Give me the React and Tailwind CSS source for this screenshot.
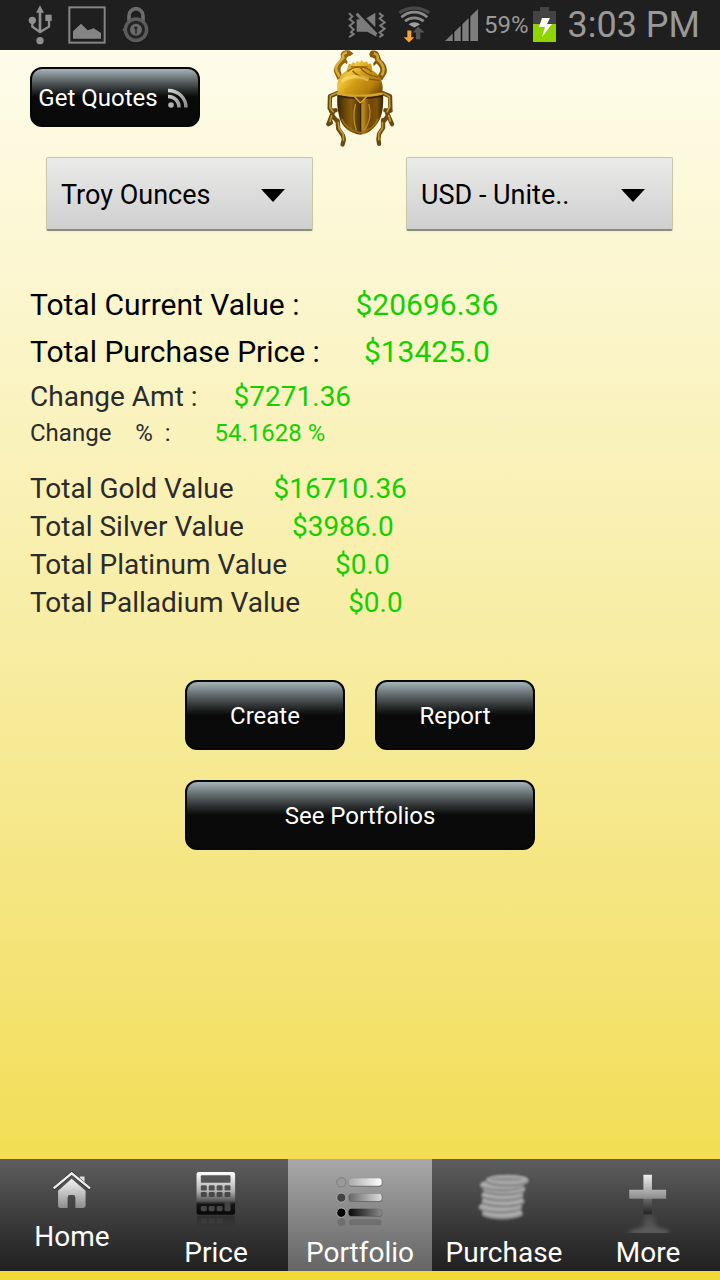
import React from "react";

function UsbIcon() {
  return (
    <svg viewBox="84 15 72 120" className="h-10 w-6" fill="#8f8f8f" aria-hidden="true">
      <path d="M120 16l12 22h-8v57h-8V38h-8z" />
      <circle cx="97" cy="61" r="11" />
      <rect x="136" y="44" width="19" height="19" />
      <circle cx="120" cy="122" r="11" />
      <path d="M97 66v14l23 16 27-16V60" fill="none" stroke="#8f8f8f" strokeWidth="7" />
    </svg>
  );
}

function PictureIcon() {
  return (
    <svg viewBox="207 18 114 114" className="size-[38px]" aria-hidden="true">
      <rect x="211" y="22" width="106" height="106" fill="none" stroke="#858585" strokeWidth="6" />
      <path d="M222 116V94l24-23 20 20 18-6 22 14v17z" fill="#858585" />
    </svg>
  );
}

function LockIcon() {
  return (
    <svg viewBox="365 17 81 111" className="h-[37px] w-[27px]" aria-hidden="true">
      <path d="M386 62V46a21 21 0 0 1 42 0v16" fill="none" stroke="#6c6c6c" strokeWidth="11" />
      <circle cx="407" cy="88" r="32" fill="#242424" stroke="#5c5c5c" strokeWidth="10" />
      <path d="M366 88l6-7v14z" fill="#5c5c5c" />
      <circle cx="407" cy="88" r="18" fill="#6a6a6a" />
      <path d="M402 79h9v6l-2 2v13h-4V87l-3-2z" fill="#202020" />
    </svg>
  );
}

function VibrateMuteIcon() {
  return (
    <svg viewBox="142 33 114 80" className="h-[27px] w-[38px]" aria-hidden="true">
      <g fill="none" stroke="#7c7c7c" strokeWidth="6">
        <path d="M145 39l10 10-8 8 12 10-12 10 12 11-8 8 8 6-14 9" />
        <path d="M235 39l11 8-9 8 15 12-13 9 13 10-15 11 9 7-10 7" />
      </g>
      <path d="M168 57h12l47 46v7l-27-15h-32z" fill="#7c7c7c" />
      <path d="M197 54l27-16v43z" fill="#7c7c7c" />
      <path d="M173 37l58 60" stroke="#1f1f1f" strokeWidth="4" />
      <path d="M168 41l59 62" stroke="#7c7c7c" strokeWidth="9" />
    </svg>
  );
}

function WifiIcon() {
  return (
    <svg viewBox="294 20 99 110" className="h-[37px] w-[33px]" aria-hidden="true">
      <path d="M298 40c27-19 62-19 90 0" fill="none" stroke="#484848" strokeWidth="10" />
      <path d="M304 53c23-20 55-20 78 0" fill="none" stroke="#8a8a8a" strokeWidth="8" />
      <path d="M315 65c16-13 39-13 56 0" fill="none" stroke="#8a8a8a" strokeWidth="8" />
      <path d="M326 75c9-9 25-9 34 0l-17 9z" fill="#a0a0a0" />
      <path d="M348 119v-20h-10l16-17 20 17h-13v20z" fill="#555" />
      <path d="M322 93h12v20h9l-16 16-16-16h11z" fill="#ffa22b" />
    </svg>
  );
}

function SignalIcon() {
  return (
    <svg viewBox="0 0 33 32" className="h-8 w-[33px]" aria-hidden="true">
      <path d="M0 32L33 0v32z" fill="#7d7d7d" />
      <path d="M8.500 21v11M16.500 14v18M24.500 7v25" stroke="#111" strokeWidth="1.500" />
    </svg>
  );
}

function BatteryIcon() {
  return (
    <svg viewBox="0 0 23 35" className="h-[35px] w-[23px]" aria-hidden="true">
      <path d="M7 0h9v4h7v14H0V4h7z" fill="#444" />
      <rect y="17" width="23" height="18" fill="#8fd400" />
      <path d="M9 11h8l-3 6h5L9 30l3-10H6z" fill="#fff" />
    </svg>
  );
}

function RssIcon() {
  return (
    <svg viewBox="0 0 20 20" className="size-5" fill="none" stroke="url(#rss)" strokeWidth="3.500" aria-hidden="true">
      <defs>
        <linearGradient id="rss" x1="0" y1="0" x2="20" y2="20" gradientUnits="userSpaceOnUse">
          <stop stopColor="#d8d8d8" />
          <stop offset="1" stopColor="#858585" />
        </linearGradient>
      </defs>
      <circle cx="3" cy="17" r="2.800" fill="#b4b4b4" stroke="none" />
      <path d="M0 8.500c7 0 11 5 11 11" />
      <path d="M0 2.500c11 0 18 8 18 17" />
    </svg>
  );
}

function Scarab() {
  return (
    <svg viewBox="42 28 214 294" className="h-[98px] w-[71px]" role="img" aria-label="Golden scarab">
      <defs>
        <linearGradient id="thorax" x1="85" y1="60" x2="210" y2="170" gradientUnits="userSpaceOnUse">
          <stop stopColor="#a5700b" />
          <stop offset="0.280" stopColor="#efc53c" />
          <stop offset="0.480" stopColor="#d29b14" />
          <stop offset="0.750" stopColor="#b47e0c" />
          <stop offset="1" stopColor="#5e3a02" />
        </linearGradient>
        <linearGradient id="shell" x1="78" y1="0" x2="220" y2="0" gradientUnits="userSpaceOnUse">
          <stop stopColor="#3a2502" />
          <stop offset="0.300" stopColor="#8a5f0c" />
          <stop offset="0.460" stopColor="#573904" />
          <stop offset="0.560" stopColor="#b98720" />
          <stop offset="0.680" stopColor="#6f4808" />
          <stop offset="0.850" stopColor="#7b520a" />
          <stop offset="1" stopColor="#2d1b02" />
        </linearGradient>
      </defs>
      <g fill="none" strokeLinecap="round" strokeLinejoin="round">
        <g stroke="#694811" strokeWidth="13">
          <path d="M80 157l-23 10-1 36 10 12-13 34" />
          <path d="M74 209l-14 2M64 225l17 20M60 246l-8 5M80 240l2 25 14 20 3 12-4 15" />
          <path d="M215 157l23 10 1 36-10 14 15 34" />
          <path d="M224 209l16 1M232 225l-15 20M217 238v24l-12 18-2 17 2 13" />
        </g>
        <g stroke="#c19831" strokeWidth="5">
          <path d="M78 156l-20 10-1 35 10 13M62 226l-5 17M82 245l2 18 13 19 1 17M219 158l17 10 1 31-8 15M234 225l5 17M215 246v17l-11 16v19" />
        </g>
      </g>
      <path d="M116 29c-17-3-27 5-27 14 3 8-1 13-6 19-12 13-17 22-13 33l10 23 14-10-5-18c-1-13 5-17 13-24l6 4 2-8c-8-8-2-15 9-17l9-7z" fill="#936511" />
      <path d="M108 35c-12 2-15 9-11 16-15 16-25 25-21 38l10 19" fill="none" stroke="#d9ae38" strokeWidth="8" />
      <path d="M180 30c16-3 23 2 27 14l4 12c16 13 20 28 16 42l-13 21-15-12c13-17 13-26-2-39l-8 8-2-8 7-10c-2-7-8-8-15-9l-4-9z" fill="#835a0c" />
      <path d="M189 37c12 3 12 8 12 19 18 16 22 29 12 48" fill="none" stroke="#cfa234" strokeWidth="8" />
      <path d="M82 158c-10-28 1-53 25-69l7-20 9 2 2-7 10 4 3-8 9 5 5-8 7 8 9-4 4 8 9-1 4 21c26 14 37 45 28 70-39 8-92 8-131-1z" fill="url(#thorax)" />
      <path d="M120 78h50" stroke="#9f6d0a" strokeWidth="4" />
      <path d="M110 92c15-16 55-20 73 2M125 90c20 23 52 25 82 29M148 79c14 24 40 28 55 30" fill="none" stroke="#895b0b" strokeWidth="4" />
      <path d="M93 122c18-16 50-20 80-5" fill="none" stroke="#ffe675" strokeWidth="10" opacity="0.550" />
      <path d="M80 160c46 10 88 10 137-1 2 41-2 74-24 99-12 13-27 24-45 25-30-4-57-22-64-58-5-21-7-45-4-65z" fill="url(#shell)" />
      <path d="M78 155c44 10 93 10 138 0v7c-45 10-92 10-138 0z" fill="#d6a62b" />
      <path d="M80 166c45 9 91 9 136 0" fill="none" stroke="#302003" strokeWidth="5" />
      <path d="M131 168l18 19 18-19" fill="#694609" stroke="#d6aa39" strokeWidth="4" />
      <path d="M149 188v92" stroke="#352104" strokeWidth="5" />
      <path d="M154 190v80M134 190c-8 30-6 57 3 80M174 190c9 31 0 60-14 80" fill="none" stroke="#bd8925" strokeWidth="4" />
      <path d="M92 235c10 22 26 34 55 42 29-6 47-20 55-43" fill="none" stroke="#9b6d17" strokeWidth="5" />
    </svg>
  );
}

function HomeIcon() {
  return (
    <svg viewBox="157 66 116 112" className="mt-3 h-[38px] w-10" aria-hidden="true">
      <defs>
        <linearGradient id="home" x1="0" y1="0" x2="0" y2="1">
          <stop stopColor="#f5f5f5" />
          <stop offset="1" stopColor="#8c8c8c" />
        </linearGradient>
      </defs>
      <path d="M238 94V82h14v23z" fill="#ddd" />
      <path d="M161 119l53-47 54 47" fill="none" stroke="#2b2b2b" strokeWidth="10" />
      <path d="M161 117l53-44 54 44" fill="none" stroke="#eee" strokeWidth="7" />
      <path d="M174 124l40-35 41 35v43q0 8-8 8h-22v-31q0-7-7-7h-9q-7 0-7 7v31h-21q-7 0-7-8z" fill="url(#home)" />
    </svg>
  );
}

function CalculatorIcon() {
  const columns = [604, 628, 652, 676];
  return (
    <svg viewBox="590 66 120 176" className="mt-3 h-[58px] w-10" aria-hidden="true">
      <defs>
        <linearGradient id="calculator" x1="0" y1="0" x2="0" y2="1">
          <stop stopColor="#fff" />
          <stop offset="0.450" stopColor="#b0b0b0" />
          <stop offset="0.680" stopColor="#555" />
          <stop offset="0.750" stopColor="#161616" />
          <stop offset="1" stopColor="#080808" />
        </linearGradient>
        <linearGradient id="calculator-reflection" x1="0" y1="0" x2="0" y2="1">
          <stop stopColor="#141414" stopOpacity="0.350" />
          <stop offset="1" stopColor="#141414" stopOpacity="0" />
        </linearGradient>
      </defs>
      <rect x="591" y="69" width="117" height="130" rx="7" fill="url(#calculator)" />
      <rect x="604" y="79" width="90" height="23" rx="3" fill="#555" />
      {columns.map((x) => (
        <g key={x}>
          <rect x={x} y="109" width="18" height="16" rx="4" fill="#505050" />
          <rect x={x} y="130" width="18" height="15" rx="4" fill="#484848" />
        </g>
      ))}
      {columns.slice(0, 3).map((x) => (
        <rect key={x} x={x} y="172" width="18" height="16" rx="4" fill="#454545" />
      ))}
      <rect x="676" y="160" width="18" height="28" rx="3" fill="#444" />
      <rect x="592" y="201" width="115" height="37" rx="5" fill="url(#calculator-reflection)" />
      <path d="M604 210h18v15h-18zM628 210h18v15h-18zM652 210h18v15h-18z" fill="#555" opacity="0.250" />
    </svg>
  );
}

function ListIcon() {
  const rows = [
    { y: 93, dot: "#9a9a9a", rim: "#7c7c7c", from: "#aaa", to: "#fff" },
    { y: 139, dot: "#444", rim: "#b4b4b4", from: "#666", to: "#ddd" },
    { y: 184, dot: "#000", rim: "#b4b4b4", from: "#080808", to: "#888" },
  ];
  return (
    <svg viewBox="168 72 150 156" className="mt-4 h-[52px] w-[50px]" aria-hidden="true">
      {rows.map((row) => (
        <g key={row.y}>
          <defs>
            <linearGradient id={`bar-${row.y}`}>
              <stop stopColor={row.from} />
              <stop offset="1" stopColor={row.to} />
            </linearGradient>
          </defs>
          <circle cx="187" cy={row.y + 1} r="14" fill={row.dot} stroke={row.rim} strokeWidth="3" />
          <rect x="209" y={row.y - 11} width="101" height="25" rx="8" fill="#606060" opacity="0.700" />
          <rect x="209" y={row.y - 11} width="99" height="22" rx="8" fill={`url(#bar-${row.y})`} />
        </g>
      ))}
      <circle cx="187" cy="214" r="12" fill="#555" opacity="0.400" />
      <rect x="210" y="205" width="98" height="18" rx="7" fill="#555" opacity="0.400" />
    </svg>
  );
}

function CoinsIcon() {
  const coins = [
    [667, 190, 63],
    [661, 171, 67],
    [669, 153, 66],
    [667, 135, 65],
    [672, 117, 66],
    [666, 104, 68],
    [682, 90, 66],
  ];
  return (
    <svg viewBox="588 68 168 146" className="mt-3.5 h-12 w-14 blur-[1px]" aria-hidden="true">
      {coins.map(([x, y, r]) => (
        <g key={y}>
          <ellipse cx={x} cy={y + 3} rx={r} ry="17" fill="#848484" />
          <ellipse cx={x} cy={y - 2} rx={r - 2} ry="15" fill="#acacac" />
        </g>
      ))}
      <ellipse cx="678" cy="87" rx="50" ry="7" fill="#929292" />
    </svg>
  );
}

function PlusIcon() {
  return (
    <svg viewBox="1036 70 138 182" className="mt-3.5 h-[60px] w-[46px]" aria-hidden="true">
      <defs>
        <linearGradient id="plus" x1="0" y1="75" x2="0" y2="195" gradientUnits="userSpaceOnUse">
          <stop stopColor="#eee" />
          <stop offset="0.600" stopColor="#8d8d8d" />
          <stop offset="0.620" stopColor="#666" />
          <stop offset="1" stopColor="#222" />
        </linearGradient>
        <linearGradient id="glow" x1="0" y1="195" x2="0" y2="250" gradientUnits="userSpaceOnUse">
          <stop stopColor="#777" stopOpacity="0.200" />
          <stop offset="1" stopColor="#888" stopOpacity="0.500" />
        </linearGradient>
        <filter id="soften">
          <feGaussianBlur stdDeviation="6" />
        </filter>
      </defs>
      <path d="M1091 75h26v46h43v27h-43v47h-26v-47h-43v-27h43z" fill="url(#plus)" />
      <path d="M1096 198h28l5 34 40 14v12h-120v-12l42-14z" fill="url(#glow)" filter="url(#soften)" />
    </svg>
  );
}

function GlossButton({ className, children }) {
  return (
    <button
      type="button"
      className={`flex items-center justify-center rounded-xl border-2 border-[#070707] bg-linear-to-b from-[#a6b5b8] to-[#0a0a0a] to-50% pt-0.5 text-2xl text-white ${className}`}
    >
      {children}
    </button>
  );
}

function Spinner({ label, value, options }) {
  return (
    <div className="flex-1 pr-[47px] pl-[46px]">
      <div className="relative">
        <select
          aria-label={label}
          defaultValue={value}
          className="block h-[74px] w-full appearance-none rounded-xs border border-b-2 border-[#c9c6a9] border-b-[#8f8c78] bg-linear-to-b from-[#ebebea] to-[#cfcfcf] pt-1 pr-16 pl-3.5 text-[27px] text-black shadow-xs"
        >
          {options.map((option) => (
            <option key={option}>{option}</option>
          ))}
        </select>
        <svg viewBox="0 0 24 13" className="pointer-events-none absolute top-8 right-7 h-[13px] w-6" aria-hidden="true">
          <path d="M0 0h24L12 13z" />
        </svg>
      </div>
    </div>
  );
}

const totals = [
  { label: "Total Current Value :", value: "$20696.36", row: "h-[47px] gap-14 text-3xl", tone: "text-black" },
  { label: "Total Purchase Price :", value: "$13425.0", row: "h-[47px] gap-11 text-3xl", tone: "text-black" },
  { label: "Change Amt :", value: "$7271.36", row: "h-11 gap-9 text-[28px]", tone: "text-[#2b2b2b]" },
  { label: "Change    %  :", value: "54.1628 %", row: "h-7 gap-11 text-2xl", tone: "text-[#2b2b2b]" },
];

const metals = [
  { label: "Total Gold Value", value: "$16710.36", row: "h-[38px] gap-10 text-[28px]", tone: "text-[#2b2b2b]" },
  { label: "Total Silver Value", value: "$3986.0", row: "h-[38px] gap-12 text-[28px]", tone: "text-[#2b2b2b]" },
  { label: "Total Platinum Value", value: "$0.0", row: "h-[38px] gap-12 text-[28px]", tone: "text-[#2b2b2b]" },
  { label: "Total Palladium Value", value: "$0.0", row: "h-[38px] gap-12 text-[28px]", tone: "text-[#2b2b2b]" },
];

function ValueList({ items, className }) {
  return (
    <dl className={`px-[30px] ${className}`}>
      {items.map((item) => (
        <div key={item.label} className={`flex items-center whitespace-pre ${item.row}`}>
          <dt className={item.tone}>{item.label}</dt>
          <dd className="text-[#14d000]">{item.value}</dd>
        </div>
      ))}
    </dl>
  );
}

const tabs = [
  { name: "Home", Icon: HomeIcon, text: "pb-4" },
  { name: "Price", Icon: CalculatorIcon, text: "" },
  { name: "Portfolio", Icon: ListIcon, text: "", active: true },
  { name: "Purchase", Icon: CoinsIcon, text: "" },
  { name: "More", Icon: PlusIcon, text: "" },
];

export default function App() {
  return (
    <div className="flex min-h-screen flex-col font-['Roboto',sans-serif]">
      <header className="flex h-[50px] items-center justify-between bg-[#1f1f1f] pr-5 pb-px pl-7 text-[#999]">
        <div className="flex items-center gap-4">
          <UsbIcon />
          <PictureIcon />
          <LockIcon />
        </div>
        <div className="flex items-center">
          <VibrateMuteIcon />
          <div className="ml-3">
            <WifiIcon />
          </div>
          <div className="ml-3.5">
            <SignalIcon />
          </div>
          <span className="ml-1.5 text-2xl">59%</span>
          <div className="ml-1">
            <BatteryIcon />
          </div>
          <span className="ml-3 text-4xl">3:03 PM</span>
        </div>
      </header>

      <div className="flex flex-1 flex-col bg-linear-to-b from-[#fefcea] to-[#f1da36]">
        <main className="flex-1">
          <div className="grid grid-cols-3">
            <div className="pt-[17px] pl-[30px]">
              <GlossButton className="h-[60px] w-[170px] gap-2.5 pr-1">
                Get Quotes
                <RssIcon />
              </GlossButton>
            </div>
            <div className="flex justify-center">
              <Scarab />
            </div>
          </div>

          <div className="mt-[9px] flex">
            <Spinner label="Weight unit" value="Troy Ounces" options={["Troy Ounces", "Grams", "Kilograms"]} />
            <Spinner label="Currency" value="USD - Unite.." options={["USD - Unite..", "EUR - Euro", "GBP - Unite.."]} />
          </div>

          <ValueList items={totals} className="mt-[50px]" />
          <ValueList items={metals} className="mt-[23px]" />

          <div className="mx-auto mt-[58px] grid w-[350px] grid-cols-2 gap-[30px]">
            <GlossButton className="h-[70px]">Create</GlossButton>
            <GlossButton className="h-[70px]">Report</GlossButton>
            <GlossButton className="col-span-2 h-[70px]">See Portfolios</GlossButton>
          </div>
        </main>

        <nav className="mb-[9px] grid grid-cols-5 bg-linear-to-b from-[#5e5e5e] to-[#202020]">
          {tabs.map(({ name, Icon, text, active }) => (
            <a
              key={name}
              href={`#${name.toLowerCase()}`}
              aria-current={active ? "page" : undefined}
              className={`flex h-28 flex-col items-center justify-between text-[28px] text-white ${
                active ? "bg-linear-to-b from-[#a9a9a9] to-[#656565]" : ""
              }`}
            >
              <Icon />
              <span className={`leading-9 ${text}`}>{name}</span>
            </a>
          ))}
        </nav>
      </div>
    </div>
  );
}
